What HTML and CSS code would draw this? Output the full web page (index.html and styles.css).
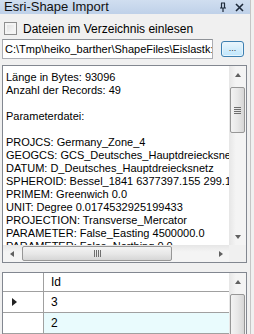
FILE: index.html
```html
<!DOCTYPE html>
<html>
<head>
<meta charset="utf-8">
<link rel="stylesheet" href="styles.css">
</head>
<body>
<div class="win">
  <div class="title">
    <span class="title-text">Esri-Shape Import</span>
    <div class="title-icons">
      <svg width="8" height="10" viewBox="0 0 8 10"><path d="M2 1h4M2.5 1v5M5.5 1v5M1 6h6M4 6v4" stroke="#1e2a3a" stroke-width="1.2" fill="none"/></svg>
      <svg width="9" height="9" viewBox="0 0 9 9"><path d="M1 1L8 8M8 1L1 8" stroke="#1e2a3a" stroke-width="1.6"/></svg>
    </div>
  </div>
  <div class="content">
    <div class="chk-row">
      <span class="chk-box"></span>
      <span class="chk-label">Dateien im Verzeichnis einlesen</span>
    </div>
    <div class="path-row">
      <div class="textbox">C:\Tmp\heiko_barther\ShapeFiles\Eislastk:</div>
      <div class="btn">...</div>
    </div>
    <div class="textpanel">
      <div class="tp-top">
        <div class="tp-text">Länge in Bytes: 93096
Anzahl der Records: 49

Parameterdatei:

PROJCS: Germany_Zone_4
GEOGCS: GCS_Deutsches_Hauptdreiecksnetz
DATUM: D_Deutsches_Hauptdreiecksnetz
SPHEROID: Bessel_1841 6377397.155 299.1528128
PRIMEM: Greenwich 0.0
UNIT: Degree 0.0174532925199433
PROJECTION: Transverse_Mercator
PARAMETER: False_Easting 4500000.0
PARAMETER: False_Northing 0.0</div>
        <div class="vscroll">
          <div class="arrow up"></div>
          <div class="vtrack"><div class="vthumb"><span class="grip-h"></span></div></div>
          <div class="arrow down"></div>
        </div>
      </div>
      <div class="tp-bottom">
        <div class="hscroll">
          <div class="arrow left"></div>
          <div class="htrack"><div class="hthumb"><span class="grip-v"></span></div></div>
          <div class="arrow right"></div>
        </div>
        <div class="corner"></div>
      </div>
    </div>
    <div class="grid">
      <div class="grid-main">
        <div class="g-row g-head">
          <div class="g-rh"></div>
          <div class="g-cell">Id</div>
        </div>
        <div class="g-row">
          <div class="g-rh"><span class="tri"></span></div>
          <div class="g-cell">3</div>
        </div>
        <div class="g-row alt">
          <div class="g-rh"></div>
          <div class="g-cell">2</div>
        </div>
      </div>
      <div class="vscroll gscroll">
        <div class="arrow up"></div>
        <div class="vtrack"><div class="vthumb tall"></div></div>
      </div>
    </div>
  </div>
</div>
</body>
</html>
```
FILE: styles.css
```css
* { box-sizing: border-box; }
html, body { margin: 0; padding: 0; }
body {
  width: 254px;
  height: 334px;
  overflow: hidden;
  background: #f0f0f0;
  font-family: "Liberation Sans", Arial, sans-serif;
  font-size: 11px;
  color: #000;
}
.win {
  width: 251px;
  height: 334px;
  display: flex;
  flex-direction: column;
  border-right: 1px solid #c5c5c5;
  overflow: hidden;
}
.title {
  height: 14px;
  flex: none;
  display: flex;
  align-items: center;
  justify-content: space-between;
  padding: 0 6px 0 4px;
  background: linear-gradient(#d0def0, #bfd1e9);
}
.title-text {
  font-size: 13px;
  color: #111;
  line-height: 14px;
}
.title-icons {
  display: flex;
  align-items: center;
  gap: 8px;
}
.content {
  flex: 1;
  display: flex;
  flex-direction: column;
  padding: 0 0 0 2px;
  min-height: 0;
}
.chk-row {
  height: 24px;
  display: flex;
  align-items: center;
  padding: 5px 0 0 2px;
  gap: 6px;
  flex: none;
}
.chk-box {
  width: 13px;
  height: 13px;
  border: 1px solid #8f8f8f;
  background: linear-gradient(135deg, #dcdcdc, #fdfdfd);
  box-shadow: inset 0 0 0 2px #f4f4f4;
}
.chk-label { line-height: 14px; font-size: 12px; }
.path-row {
  display: flex;
  align-items: center;
  margin-top: 1px;
  height: 20px;
  flex: none;
}
.textbox {
  width: 211px;
  height: 20px;
  border: 1px solid #abadb3;
  border-top-color: #8e9297;
  background: #fff;
  padding: 3px 0 0 2px;
  line-height: 13px;
  white-space: nowrap;
  overflow: hidden;
}
.btn {
  margin-left: 8px;
  width: 23px;
  height: 16px;
  border: 1px solid #3c7fb1;
  border-radius: 3px;
  background: linear-gradient(#eaf6fd, #d4edfb 50%, #bee6fd);
  box-shadow: inset 0 0 0 1px #e8f4fb;
  text-align: center;
  font-size: 9px;
  line-height: 13px;
  color: #333;
}
.textpanel {
  margin-top: 6px;
  width: 245px;
  height: 198px;
  flex: none;
  border: 1px solid #828790;
  background: #fff;
  display: flex;
  flex-direction: column;
}
.tp-top {
  flex: 1;
  display: flex;
  min-height: 0;
}
.tp-text {
  flex: 1;
  white-space: pre;
  overflow: hidden;
  padding: 5px 0 0 3px;
  line-height: 13px;
}
.vscroll {
  width: 17px;
  flex: none;
  display: flex;
  flex-direction: column;
  background: linear-gradient(90deg, #e6e6e6, #f4f4f4 40%, #f4f4f4);
}
.arrow {
  flex: none;
  width: 17px;
  height: 17px;
  position: relative;
}
.arrow::after {
  content: "";
  position: absolute;
  left: 50%;
  top: 50%;
  border: 3px solid transparent;
}
.arrow.up::after { border-bottom: 4px solid #606060; border-top: 0; margin: -2px 0 0 -3px; }
.arrow.down::after { border-top: 4px solid #606060; border-bottom: 0; margin: -2px 0 0 -3px; }
.arrow.left::after { border-right: 4px solid #606060; border-left: 0; margin: -3px 0 0 -2px; }
.arrow.right::after { border-left: 4px solid #606060; border-right: 0; margin: -3px 0 0 -2px; }
.vtrack {
  flex: 1;
  display: flex;
  flex-direction: column;
  padding: 4px 1px 0 0;
}
.vthumb {
  height: 46px;
  width: 15px;
  margin-left: 1px;
  border: 1px solid #979797;
  border-radius: 2px;
  background: linear-gradient(90deg, #f3f3f3, #e8e8e8 50%, #d6d6d6);
  display: flex;
  align-items: center;
  justify-content: center;
}
.vthumb.tall { height: 60px; }
.grip-h {
  width: 7px;
  height: 7px;
  background: repeating-linear-gradient(#6e6e6e 0 1px, transparent 1px 2px);
}
.tp-bottom {
  height: 17px;
  flex: none;
  display: flex;
}
.hscroll {
  flex: 1;
  display: flex;
  background: linear-gradient(#e6e6e6, #f4f4f4 40%, #f4f4f4);
}
.htrack {
  flex: 1;
  padding: 1px 0 1px 2px;
  display: flex;
}
.hthumb {
  width: 150px;
  height: 15px;
  border: 1px solid #979797;
  border-radius: 2px;
  background: linear-gradient(#f3f3f3, #e8e8e8 50%, #d6d6d6);
  display: flex;
  align-items: center;
  justify-content: center;
}
.grip-v {
  width: 7px;
  height: 7px;
  background: repeating-linear-gradient(90deg, #6e6e6e 0 1px, transparent 1px 2px);
}
.corner {
  width: 17px;
  background: #f0f0f0;
}
.grid {
  margin-top: 9px;
  width: 245px;
  flex: 1;
  border: 1px solid #828790;
  border-bottom: 0;
  background: #fff;
  display: flex;
  min-height: 0;
  overflow: hidden;
}
.grid-main {
  flex: 1;
  display: flex;
  flex-direction: column;
}
.g-row {
  display: flex;
  height: 21px;
  flex: none;
  border-bottom: 1px solid #a0a0a0;
}
.g-row.g-head {
  height: 19px;
  background: #fff;
}
.g-rh {
  width: 41px;
  flex: none;
  border-right: 1px solid #a0a0a0;
  background: #fff;
  display: flex;
  align-items: center;
  padding-left: 9px;
}
.g-cell {
  flex: 1;
  padding-left: 7px;
  display: flex;
  align-items: center;
  font-size: 12px;
}
.g-row.alt .g-cell { background: #e9fbfd; }
.tri {
  width: 0;
  height: 0;
  border-top: 4px solid transparent;
  border-bottom: 4px solid transparent;
  border-left: 5px solid #222;
}
```
